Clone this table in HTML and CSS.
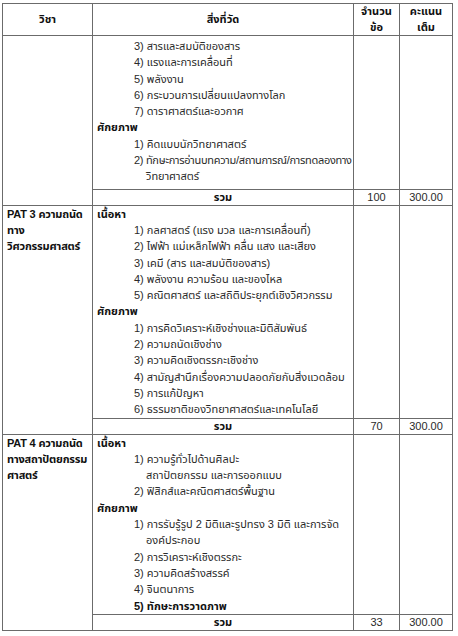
FILE: index.html
```html
<!DOCTYPE html>
<html lang="th">
<head>
<meta charset="utf-8">
<link rel="stylesheet" href="styles.css">
</head>
<body>
<div class="page">
<table class="grid">
  <colgroup>
    <col class="c1"><col class="c2"><col class="c3"><col class="c4">
  </colgroup>
  <thead>
    <tr class="head">
      <th>วิชา</th>
      <th>สิ่งที่วัด</th>
      <th>จำนวน<br>ข้อ</th>
      <th>คะแนน<br>เต็ม</th>
    </tr>
  </thead>
  <tbody>
    <tr class="body r1">
      <td class="subj" rowspan="2"></td>
      <td class="meas">
        <div class="it">3) สารและสมบัติของสาร</div>
        <div class="it">4) แรงและการเคลื่อนที่</div>
        <div class="it">5) พลังงาน</div>
        <div class="it">6) กระบวนการเปลี่ยนแปลงทางโลก</div>
        <div class="it">7) ดาราศาสตร์และอวกาศ</div>
        <div class="hd">ศักยภาพ</div>
        <div class="it">1) คิดแบบนักวิทยาศาสตร์</div>
        <div class="it tight">2) ทักษะการอ่านบทความ/สถานการณ์/การทดลองทาง</div>
        <div class="cont">วิทยาศาสตร์</div>
      </td>
      <td></td>
      <td></td>
    </tr>
    <tr class="sum">
      <td class="lbl">รวม</td>
      <td>100</td>
      <td>300.00</td>
    </tr>

    <tr class="body">
      <td class="subj" rowspan="2">PAT 3 ความถนัด<br>ทาง<br>วิศวกรรมศาสตร์</td>
      <td class="meas">
        <div class="hd">เนื้อหา</div>
        <div class="it">1) กลศาสตร์ (แรง มวล และการเคลื่อนที่)</div>
        <div class="it">2) ไฟฟ้า แม่เหล็กไฟฟ้า คลื่น แสง และเสียง</div>
        <div class="it">3) เคมี (สาร และสมบัติของสาร)</div>
        <div class="it">4) พลังงาน ความร้อน และของไหล</div>
        <div class="it">5) คณิตศาสตร์ และสถิติประยุกต์เชิงวิศวกรรม</div>
        <div class="hd">ศักยภาพ</div>
        <div class="it">1) การคิดวิเคราะห์เชิงช่างและมิติสัมพันธ์</div>
        <div class="it">2) ความถนัดเชิงช่าง</div>
        <div class="it">3) ความคิดเชิงตรรกะเชิงช่าง</div>
        <div class="it">4) สามัญสำนึกเรื่องความปลอดภัยกับสิ่งแวดล้อม</div>
        <div class="it">5) การแก้ปัญหา</div>
        <div class="it">6) ธรรมชาติของวิทยาศาสตร์และเทคโนโลยี</div>
      </td>
      <td></td>
      <td></td>
    </tr>
    <tr class="sum">
      <td class="lbl">รวม</td>
      <td>70</td>
      <td>300.00</td>
    </tr>

    <tr class="body">
      <td class="subj" rowspan="2">PAT 4 ความถนัด<br>ทางสถาปัตยกรรม<br>ศาสตร์</td>
      <td class="meas">
        <div class="hd">เนื้อหา</div>
        <div class="it">1) ความรู้ทั่วไปด้านศิลปะ</div>
        <div class="cont">สถาปัตยกรรม และการออกแบบ</div>
        <div class="it">2) ฟิสิกส์และคณิตศาสตร์พื้นฐาน</div>
        <div class="hd">ศักยภาพ</div>
        <div class="it">1) การรับรู้รูป 2 มิติและรูปทรง 3 มิติ และการจัด</div>
        <div class="cont">องค์ประกอบ</div>
        <div class="it">2) การวิเคราะห์เชิงตรรกะ</div>
        <div class="it">3) ความคิดสร้างสรรค์</div>
        <div class="it">4) จินตนาการ</div>
        <div class="it strong">5) ทักษะการวาดภาพ</div>
      </td>
      <td></td>
      <td></td>
    </tr>
    <tr class="sum">
      <td class="lbl">รวม</td>
      <td>33</td>
      <td>300.00</td>
    </tr>
  </tbody>
</table>
</div>
</body>
</html>
```
FILE: styles.css
```css
html, body {
  margin: 0;
  padding: 0;
  background: #ffffff;
}

.page {
  padding: 3px 0 0 2px;
  font-family: "Liberation Sans", "Noto Sans Thai", "Noto Sans", sans-serif;
  font-size: 11px;
  color: #2a2a2a;
}

.grid {
  border-collapse: collapse;
  table-layout: fixed;
  width: 450px;
}

.grid col.c1 { width: 90px; }
.grid col.c2 { width: 261px; }
.grid col.c3 { width: 46px; }
.grid col.c4 { width: 53px; }

.grid th,
.grid td {
  border: 1px solid #6b6b6b;
  padding: 0 4px;
  line-height: 16.3px;
  white-space: nowrap;
}

.head th {
  height: 30px;
  font-weight: bold;
  color: #111;
  text-align: center;
  vertical-align: middle;
  line-height: 15.5px;
}

.body td {
  vertical-align: top;
}

.subj {
  font-weight: bold;
  color: #111;
  vertical-align: top;
  padding-top: 1px;
  letter-spacing: -0.2px;
}

.meas {
  padding-top: 1px;
  padding-bottom: 0;
}

.r1 .meas {
  padding-top: 2px;
  padding-bottom: 4px;
}

.hd {
  font-weight: bold;
  color: #111;
}

.it {
  padding-left: 37px;
}

.tight {
  letter-spacing: -0.3px;
}

.cont {
  padding-left: 49px;
}

.strong {
  font-weight: bold;
  color: #111;
}

.sum td {
  text-align: center;
  height: 15px;
  line-height: 15px;
}

.sum td.lbl {
  font-weight: bold;
  color: #111;
}
```
